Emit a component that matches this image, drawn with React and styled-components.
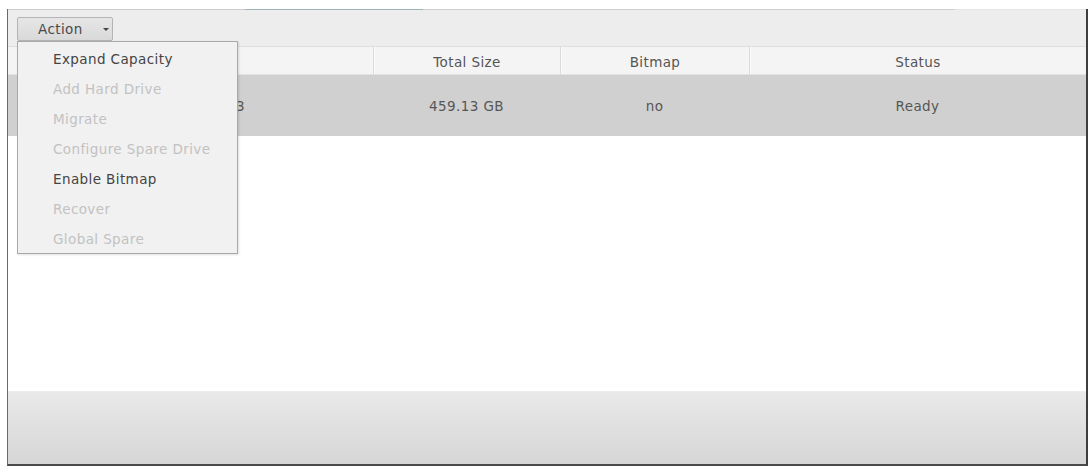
import React from "react";
import styled, { createGlobalStyle } from "styled-components";

const Global = createGlobalStyle`
  html, body { margin: 0; padding: 0; background: #ffffff; }
  body { font-family: "DejaVu Sans", "Liberation Sans", sans-serif; }
`;

const Page = styled.div`
  width: 1092px;
  height: 468px;
  padding: 9px 4px 0 7px;
  box-sizing: border-box;
  background: #ffffff;
`;

const Frame = styled.div`
  position: relative;
  width: 1081px;
  height: 457px;
  box-sizing: border-box;
  border-left: 1px solid #6a6a6a;
  border-right: 2px solid #3e3e3e;
  border-bottom: 2px solid #4a4a4a;
  display: flex;
  flex-direction: column;
  box-shadow: inset 2px 0 0 #d8d8d8;
`;

const TopEdge = styled.div`
  display: flex;
  height: 1px;
  flex: none;
`;

const EdgeSeg = styled.div`
  height: 1px;
  width: ${(p) => p.$w}px;
  flex: ${(p) => (p.$w ? "none" : "1")};
  background: ${(p) => p.$c};
`;

const Toolbar = styled.div`
  height: 37px;
  flex: none;
  display: flex;
  align-items: flex-start;
  padding: 7px 0 0 9px;
  box-sizing: border-box;
  background: #ededed;
  border-bottom: 1px solid #dedede;
`;

const ActionButton = styled.div`
  width: 96px;
  height: 24px;
  box-sizing: border-box;
  border: 1px solid #b4b4b4;
  border-radius: 2px;
  background: linear-gradient(#e6e6e6, #d9d9d9);
  display: flex;
  align-items: center;
  padding-left: 20px;
  gap: 20px;
  font-size: 13.5px;
  letter-spacing: 0.4px;
  color: #4a4a4a;
`;

const Caret = styled.span`
  width: 0;
  height: 0;
  border-left: 3px solid transparent;
  border-right: 3px solid transparent;
  border-top: 3px solid #444;
  margin-top: 1px;
`;

const Menu = styled.div`
  position: absolute;
  left: 9px;
  top: 32px;
  width: 221px;
  height: 213px;
  box-sizing: border-box;
  border: 1px solid #a9a9a9;
  background: #f1f1f1;
  padding-top: 2px;
  box-shadow: 1px 1px 2px rgba(0, 0, 0, 0.12);
  z-index: 5;
`;

const MenuItem = styled.div`
  height: 30px;
  display: flex;
  align-items: center;
  padding-left: 35px;
  font-size: 13.5px;
  letter-spacing: 0.4px;
  color: ${(p) => (p.$disabled ? "#c2c2c2" : "#444444")};
  white-space: nowrap;
`;

const Grid = styled.div`
  display: grid;
  grid-template-columns: 365px 187px 189px 1fr;
`;

const HeaderRow = styled(Grid)`
  height: 28px;
  flex: none;
  background: #f4f4f4;
  border-bottom: 1px solid #e2e2e2;
  box-sizing: border-box;
`;

const HeadCell = styled.div`
  display: flex;
  align-items: center;
  justify-content: center;
  padding-top: 2px;
  font-size: 13.5px;
  letter-spacing: 0.4px;
  color: #555;
  border-left: ${(p) => (p.$first ? "none" : "1px solid #dadada")};
  box-shadow: ${(p) => (p.$first ? "none" : "inset 1px 0 0 #fbfbfb")};
`;

const DataRow = styled(Grid)`
  height: 61px;
  flex: none;
  background: #d0d0d0;
`;

const Cell = styled.div`
  display: flex;
  align-items: center;
  justify-content: center;
  font-size: 13.5px;
  letter-spacing: 0.4px;
  color: #565656;
`;

const Body = styled.div`
  flex: 1;
  background: #ffffff;
`;

const Footer = styled.div`
  height: 72px;
  flex: none;
  border-top: 1px solid #ececec;
  background: linear-gradient(#e9e9e9, #d6d6d6);
`;

const menuItems = [
  { label: "Expand Capacity" },
  { label: "Add Hard Drive", disabled: true },
  { label: "Migrate", disabled: true },
  { label: "Configure Spare Drive", disabled: true },
  { label: "Enable Bitmap" },
  { label: "Recover", disabled: true },
  { label: "Global Spare", disabled: true },
];

export default function App() {
  return (
    <>
      <Global />
      <Page>
        <Frame>
          <TopEdge>
            <EdgeSeg $w={237} $c="#cdcdcd" />
            <EdgeSeg $w={178} $c="#9fb3b6" />
            <EdgeSeg $w={532} $c="#cfcfcf" />
            <EdgeSeg $c="#e6e6e6" />
          </TopEdge>
          <Toolbar>
            <ActionButton>
              Action <Caret />
            </ActionButton>
          </Toolbar>
          <HeaderRow>
            <HeadCell $first />
            <HeadCell>Total Size</HeadCell>
            <HeadCell>Bitmap</HeadCell>
            <HeadCell>Status</HeadCell>
          </HeaderRow>
          <DataRow>
            <Cell>RAID 5 Group 3</Cell>
            <Cell>459.13 GB</Cell>
            <Cell>no</Cell>
            <Cell>Ready</Cell>
          </DataRow>
          <Body />
          <Footer />
          <Menu>
            {menuItems.map((m) => (
              <MenuItem key={m.label} $disabled={m.disabled}>
                {m.label}
              </MenuItem>
            ))}
          </Menu>
        </Frame>
      </Page>
    </>
  );
}
